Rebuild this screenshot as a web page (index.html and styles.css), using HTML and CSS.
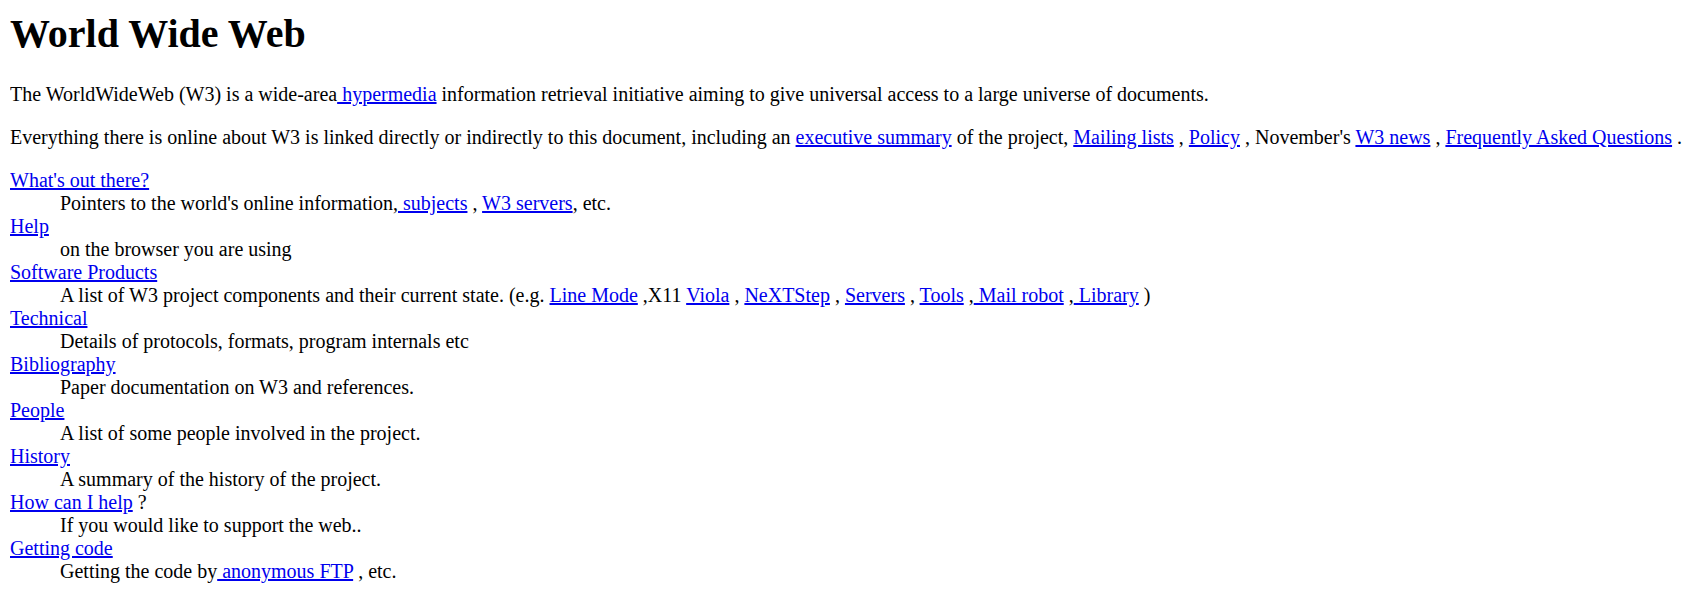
FILE: index.html
```html
<!DOCTYPE html>
<html>
<head>
<meta charset="utf-8">
<title>The World Wide Web project</title>
<link rel="stylesheet" href="styles.css">
</head>
<body class="page">
<h1 class="title">World Wide Web</h1>
<p class="para">The WorldWideWeb (W3) is a wide-area<a class="lnk" href="#"> hypermedia</a> information retrieval initiative aiming to give universal access to a large universe of documents.</p>
<p class="para">Everything there is online about W3 is linked directly or indirectly to this document, including an <a class="lnk" href="#">executive summary</a> of the project, <a class="lnk" href="#">Mailing lists</a> , <a class="lnk" href="#">Policy</a> , November's <a class="lnk" href="#">W3 news</a> , <a class="lnk" href="#">Frequently Asked Questions</a> .</p>
<dl class="list">
<dt class="term"><a class="lnk" href="#">What's out there?</a></dt>
<dd class="desc">Pointers to the world's online information,<a class="lnk" href="#"> subjects</a> , <a class="lnk" href="#">W3 servers</a>, etc.</dd>
<dt class="term"><a class="lnk" href="#">Help</a></dt>
<dd class="desc">on the browser you are using</dd>
<dt class="term"><a class="lnk" href="#">Software Products</a></dt>
<dd class="desc">A list of W3 project components and their current state. (e.g. <a class="lnk" href="#">Line Mode</a> ,X11 <a class="lnk" href="#">Viola</a> , <a class="lnk" href="#">NeXTStep</a> , <a class="lnk" href="#">Servers</a> , <a class="lnk" href="#">Tools</a> ,<a class="lnk" href="#"> Mail robot</a> ,<a class="lnk" href="#"> Library</a> )</dd>
<dt class="term"><a class="lnk" href="#">Technical</a></dt>
<dd class="desc">Details of protocols, formats, program internals etc</dd>
<dt class="term"><a class="lnk" href="#">Bibliography</a></dt>
<dd class="desc">Paper documentation on W3 and references.</dd>
<dt class="term"><a class="lnk" href="#">People</a></dt>
<dd class="desc">A list of some people involved in the project.</dd>
<dt class="term"><a class="lnk" href="#">History</a></dt>
<dd class="desc">A summary of the history of the project.</dd>
<dt class="term"><a class="lnk" href="#">How can I help</a> ?</dt>
<dd class="desc">If you would like to support the web..</dd>
<dt class="term"><a class="lnk" href="#">Getting code</a></dt>
<dd class="desc">Getting the code by<a class="lnk" href="#"> anonymous FTP</a> , etc.</dd>
</dl>
</body>
</html>
```
FILE: styles.css
```css
html, body {
  background: #ffffff;
}
.page {
  margin: 10px;
  font-family: "Liberation Serif", "Times New Roman", serif;
  font-size: 20px;
  color: #000000;
}
.title {
  font-size: 40px;
  font-weight: bold;
  margin: 0 0 26px 0;
}
.para {
  margin: 20px 0;
}
.list {
  margin: 20px 0;
}
.term {
  margin: 0;
}
.desc {
  margin: 0 0 0 50px;
}
.lnk {
  color: #0000ee;
  text-decoration: underline;
}
```
